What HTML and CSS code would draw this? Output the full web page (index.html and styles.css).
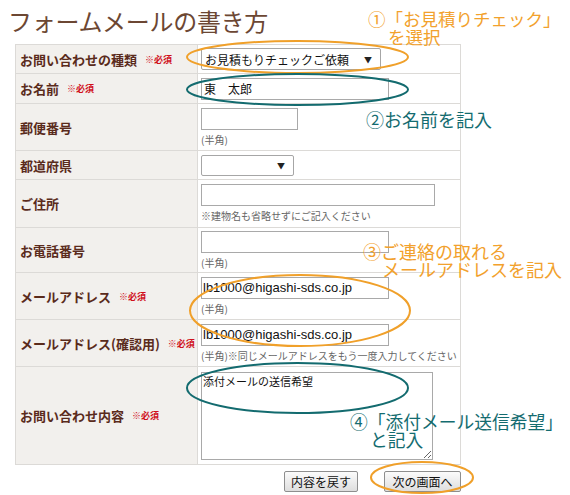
FILE: index.html
```html
<!DOCTYPE html>
<html lang="ja">
<head>
<meta charset="utf-8">
<title>フォームメールの書き方</title>
<link rel="stylesheet" href="styles.css">
</head>
<body>
<div class="page">
  <header class="head">
    <h1 class="title">フォームメールの書き方</h1>
  </header>

  <div class="form">
    <div class="label r1">お問い合わせの種類<span class="req">※必須</span></div>
    <div class="field">
      <div class="select sel-type"><span>お見積もりチェックご依頼</span><span class="arrow">▼</span></div>
    </div>

    <div class="label r2">お名前<span class="req">※必須</span></div>
    <div class="field">
      <input class="text w188" type="text" value="東　太郎">
    </div>

    <div class="label r3">郵便番号</div>
    <div class="field">
      <input class="text w97" type="text" value="">
      <div class="note">(半角)</div>
    </div>

    <div class="label r4">都道府県</div>
    <div class="field">
      <div class="select sel-pref"><span></span><span class="arrow">▼</span></div>
    </div>

    <div class="label r5">ご住所</div>
    <div class="field">
      <input class="text w234" type="text" value="">
      <div class="note">※建物名も省略せずにご記入ください</div>
    </div>

    <div class="label r6">お電話番号</div>
    <div class="field">
      <input class="text w188" type="text" value="">
      <div class="note">(半角)</div>
    </div>

    <div class="label r7">メールアドレス<span class="req">※必須</span></div>
    <div class="field">
      <input class="text w188 latin" type="text" value="lb1000@higashi-sds.co.jp">
      <div class="note">(半角)</div>
    </div>

    <div class="label r8">メールアドレス(確認用)<span class="req">※必須</span></div>
    <div class="field">
      <input class="text w188 latin" type="text" value="lb1000@higashi-sds.co.jp">
      <div class="note">(半角)※同じメールアドレスをもう一度入力してください</div>
    </div>

    <div class="label r9">お問い合わせ内容<span class="req">※必須</span></div>
    <div class="field">
      <textarea class="area">添付メールの送信希望</textarea>
    </div>
  </div>

  <div class="buttons">
    <button class="btn b-back" type="button">内容を戻す</button>
    <button class="btn b-next" type="button">次の画面へ</button>
  </div>

  <svg class="marks" width="570" height="495" viewBox="0 0 570 495" aria-hidden="true">
    <ellipse cx="297.5" cy="57" rx="110.5" ry="16" class="o"/>
    <ellipse cx="297.5" cy="89.5" rx="110.5" ry="15.5" class="t"/>
    <ellipse cx="300" cy="310.5" rx="110" ry="35.5" class="o"/>
    <ellipse cx="297.5" cy="388" rx="110.5" ry="25" class="t"/>
    <ellipse cx="422" cy="477.5" rx="51" ry="15.5" class="o"/>
  </svg>

  <div class="anno orange a1">①「お見積りチェック」<br><span class="ind">を選択</span></div>
  <div class="anno teal a2">②お名前を記入</div>
  <div class="anno orange a3">③ご連絡の取れる<br><span class="ind">メールアドレスを記入</span></div>
  <div class="anno teal a4">④「添付メール送信希望」<br><span class="ind">と記入</span></div>
</div>
</body>
</html>
```

FILE: styles.css
```css
html, body {
  margin: 0;
  padding: 0;
  background: #ffffff;
}

.page {
  position: relative;
  width: 570px;
  height: 495px;
  overflow: hidden;
  font-family: "Noto Sans CJK JP", "Noto Sans", sans-serif;
  color: #222;
}

.head {
  height: 44px;
  box-sizing: border-box;
  padding: 6px 0 0 8px;
}

.title {
  margin: 0;
  font-size: 24px;
  line-height: 30px;
  font-weight: 400;
  color: #6c4733;
  letter-spacing: -0.3px;
}

.form {
  margin-left: 15px;
  width: 446px;
  box-sizing: border-box;
  padding: 1px;
  background: #dcdad7;
  display: grid;
  grid-template-columns: 181px 262px;
  grid-template-rows: 28px 29px 46px 28px 47px 44px 46px 46px 97px;
  gap: 1px;
}

.label {
  background: #f2f0ed;
  display: flex;
  align-items: center;
  padding-left: 4px;
  font-size: 13px;
  font-weight: 700;
  color: #5a2b1c;
  white-space: nowrap;
}

.req {
  margin-left: 8px;
  font-size: 9px;
  font-weight: 700;
  color: #d0101c;
}

.field {
  background: #ffffff;
  display: flex;
  flex-direction: column;
  justify-content: center;
  align-items: flex-start;
  gap: 3px;
  padding-left: 3px;
}

.select {
  box-sizing: border-box;
  height: 22px;
  border: 1px solid #a6a6a6;
  border-radius: 2px;
  background: #ffffff;
  display: flex;
  align-items: center;
  justify-content: space-between;
  padding: 0 8px 0 3px;
  font-size: 12px;
  color: #111;
}

.sel-type { width: 180px; }
.sel-pref { width: 93px; height: 21px; }

.arrow {
  font-size: 8px;
  color: #222;
}

.text {
  box-sizing: border-box;
  height: 22px;
  margin: 0;
  border: 1px solid #a9a9a9;
  padding: 0 2px;
  font-family: "Noto Sans CJK JP", sans-serif;
  font-size: 12px;
  color: #111;
  background: #fff;
}

.latin {
  font-family: "Liberation Sans", "Noto Sans CJK JP", sans-serif;
  font-size: 13px;
  padding-left: 1px;
}

.w97 { width: 97px; }
.w188 { width: 188px; }
.w234 { width: 234px; }

.note {
  font-size: 10px;
  line-height: 14px;
  color: #666;
  white-space: nowrap;
}

.area {
  box-sizing: border-box;
  width: 232px;
  height: 88px;
  margin: 0;
  border: 1px solid #a9a9a9;
  padding: 1px 1px;
  font-family: "Noto Sans CJK JP", sans-serif;
  font-size: 11px;
  line-height: 15px;
  color: #111;
  resize: both;
}

.buttons {
  margin: 6px 0 0 15px;
  width: 446px;
  display: flex;
  justify-content: flex-end;
  gap: 26px;
}

.btn {
  box-sizing: border-box;
  height: 21px;
  margin: 0;
  padding: 0;
  border: 1px solid #8e8e8e;
  border-radius: 2px;
  background: linear-gradient(#fbfbfb, #dedede);
  font-family: "Noto Sans CJK JP", sans-serif;
  font-size: 12px;
  color: #111;
}

.b-back { width: 74px; }
.b-next { width: 77px; }

.marks {
  position: absolute;
  left: 0;
  top: 0;
  pointer-events: none;
}

.marks ellipse {
  fill: none;
  stroke-width: 2;
}

.marks .o { stroke: #f0a02a; }
.marks .t { stroke: #136b6f; }

.anno {
  position: absolute;
  font-size: 17.5px;
  line-height: 18px;
  white-space: nowrap;
}

.orange { color: #f2a12c; }
.teal { color: #146c70; }

.ind { display: inline-block; padding-left: 20px; }

.a1 { left: 368px; top: 10px; }
.a2 { left: 366px; top: 110px; font-size: 18px; }
.a3 { left: 363px; top: 242px; font-size: 18px; }
.a3 .ind { padding-left: 19px; }
.a4 { left: 350px; top: 412px; font-size: 17.75px; }
```
